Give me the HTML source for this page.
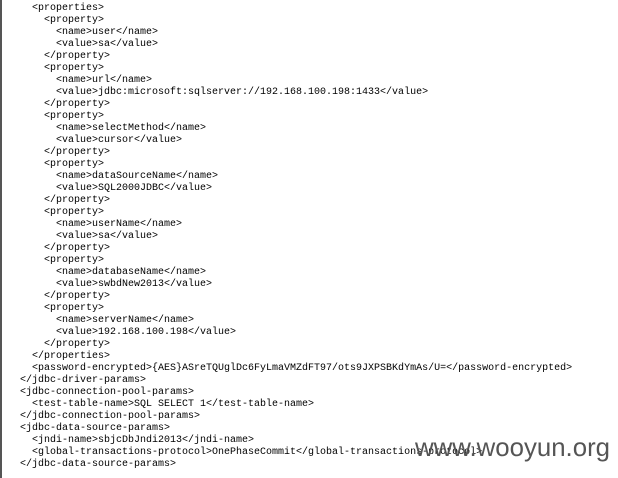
<!DOCTYPE html>
<html><head><style>
body{margin:0;width:618px;height:478px;background:#fff;overflow:hidden;position:relative}
.bar{position:absolute;left:0;top:0;width:2px;height:478px;background:#555}
pre{position:absolute;left:20px;top:3px;margin:0;font-family:"Liberation Mono","Noto Sans CJK SC",monospace;font-size:10px;line-height:12px;color:#000}
.wm{position:absolute;left:415px;top:434px;font-family:"Liberation Sans",sans-serif;font-size:25.8px;color:#555}
</style></head><body>
<div class="bar"></div>
<pre>  &lt;properties&gt;
    &lt;property&gt;
      &lt;name&gt;user&lt;/name&gt;
      &lt;value&gt;sa&lt;/value&gt;
    &lt;/property&gt;
    &lt;property&gt;
      &lt;name&gt;url&lt;/name&gt;
      &lt;value&gt;jdbc:microsoft:sqlserver://192.168.100.198:1433&lt;/value&gt;
    &lt;/property&gt;
    &lt;property&gt;
      &lt;name&gt;selectMethod&lt;/name&gt;
      &lt;value&gt;cursor&lt;/value&gt;
    &lt;/property&gt;
    &lt;property&gt;
      &lt;name&gt;dataSourceName&lt;/name&gt;
      &lt;value&gt;SQL2000JDBC&lt;/value&gt;
    &lt;/property&gt;
    &lt;property&gt;
      &lt;name&gt;userName&lt;/name&gt;
      &lt;value&gt;sa&lt;/value&gt;
    &lt;/property&gt;
    &lt;property&gt;
      &lt;name&gt;databaseName&lt;/name&gt;
      &lt;value&gt;swbdNew2013&lt;/value&gt;
    &lt;/property&gt;
    &lt;property&gt;
      &lt;name&gt;serverName&lt;/name&gt;
      &lt;value&gt;192.168.100.198&lt;/value&gt;
    &lt;/property&gt;
  &lt;/properties&gt;
  &lt;password-encrypted&gt;{AES}ASreTQUglDc6FyLmaVMZdFT97/ots9JXPSBKdYmAs/U=&lt;/password-encrypted&gt;
&lt;/jdbc-driver-params&gt;
&lt;jdbc-connection-pool-params&gt;
  &lt;test-table-name&gt;SQL SELECT 1&lt;/test-table-name&gt;
&lt;/jdbc-connection-pool-params&gt;
&lt;jdbc-data-source-params&gt;
  &lt;jndi-name&gt;sbjcDbJndi2013&lt;/jndi-name&gt;
  &lt;global-transactions-protocol&gt;OnePhaseCommit&lt;/global-transactions-protocol&gt;
&lt;/jdbc-data-source-params&gt;</pre>
<div class="wm">www.wooyun.org</div>
</body></html>
